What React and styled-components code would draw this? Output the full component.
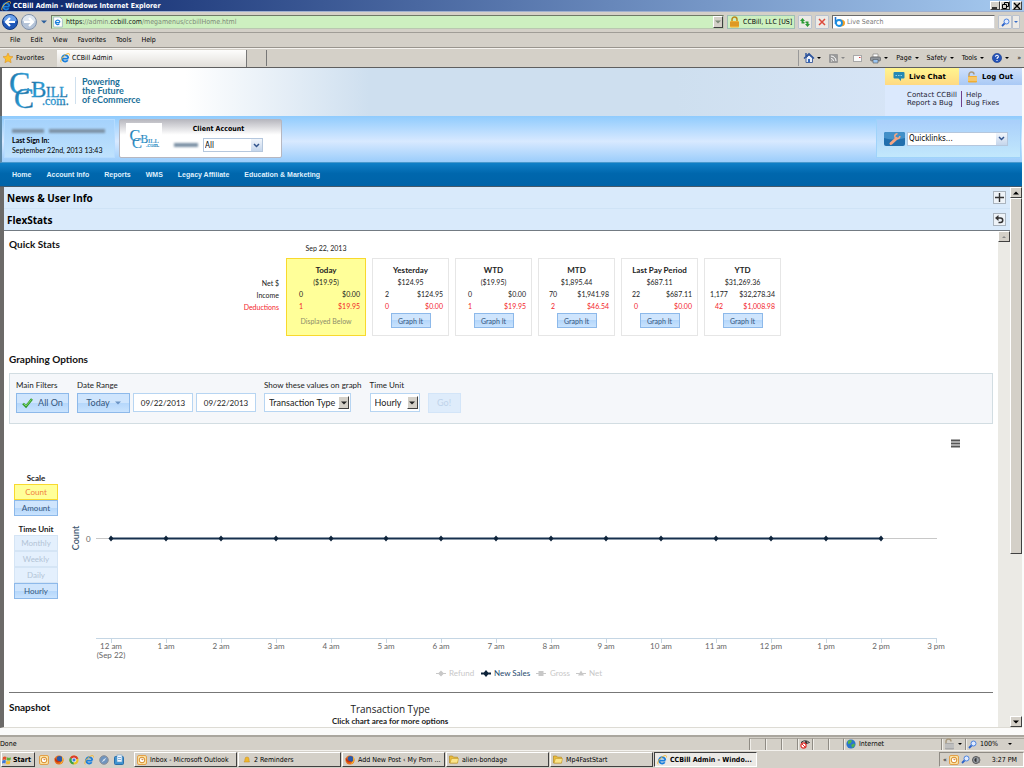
import React, { useState } from "react";
import styled, { createGlobalStyle, css } from "styled-components";

const ui = `"DejaVu Sans Condensed", "DejaVu Sans", sans-serif`;
const verdana = `"DejaVu Sans", sans-serif`;
const treb = `Lato, "Open Sans", sans-serif`;
const open = `"Open Sans", "Noto Sans", sans-serif`;
const arial = `"Liberation Sans", sans-serif`;

const GlobalStyle = createGlobalStyle`
  * {
    box-sizing: border-box;
  }
  body {
    margin: 0;
    overflow: hidden;
    color: #000;
    font-family: ${ui};
    font-size: 7px;
  }
  button, input, select {
    margin: 0;
    padding: 0;
    border: 0;
    border-radius: 0;
    background: none;
    color: inherit;
    font: inherit;
    appearance: none;
  }
  a {
    color: inherit;
    text-decoration: none;
  }
  svg {
    display: block;
    flex: none;
    overflow: visible;
  }
  h2, h3, p {
    margin: 0;
  }
`;

/* ---------- browser window ---------- */

const Window = styled.div`
  display: flex;
  flex-direction: column;
  height: 100vh;
  background: #d4d0c8;
  overflow: hidden;
`;

const TitleBar = styled.div`
  display: flex;
  align-items: center;
  gap: 2px;
  height: 12px;
  padding: 0 2px 0 1px;
  border-bottom: 1px solid #9fb0cf;
  background: linear-gradient(90deg, #0a246a, #a6caf0);
  color: #fff;
  font-weight: bold;
  white-space: nowrap;
`;

const WindowButtons = styled.div`
  display: flex;
  margin-left: auto;
`;

const raised = css`
  border: 1px solid;
  border-color: #fff #404040 #404040 #fff;
  background: #d4d0c8;
`;

const WindowButton = styled.button`
  ${raised}
  display: flex;
  align-items: center;
  justify-content: center;
  width: 10px;
  height: 9px;
  margin-left: ${(props) => (props.$apart ? "2px" : 0)};
`;

const AddressRow = styled.div`
  display: flex;
  align-items: center;
  gap: 3px;
  height: 21px;
  padding: 0 4px 0 2px;
  border-bottom: 1px solid #a09d97;
`;

const PlainButton = styled.button`
  display: flex;
  align-items: center;
  justify-content: center;
  gap: 3px;
  white-space: nowrap;
`;

const HistoryArrow = styled(PlainButton)`
  width: 8px;
`;

const AddressField = styled.div`
  display: flex;
  flex: 1;
  align-items: center;
  gap: 3px;
  height: 14px;
  padding-left: 1px;
  border: 1px solid;
  border-color: #6f7a66 #b9c8b0 #b9c8b0 #6f7a66;
  background: #cdf0c0;
  color: #7d8a78;

  b {
    color: #111;
    font-weight: normal;
  }
`;

const FieldArrow = styled.button`
  ${raised}
  display: flex;
  align-items: center;
  justify-content: center;
  width: 10px;
  height: 12px;
  margin-left: auto;
`;

const Certificate = styled.button`
  display: flex;
  align-items: center;
  gap: 3px;
  width: 68px;
  height: 14px;
  padding-left: 1px;
  border: 1px solid #9fbfb4;
  background: #cdf0c0;
  white-space: nowrap;
`;

const ToolButton = styled(PlainButton)`
  width: ${(props) => props.$width || 14}px;
  height: 14px;
  border: 1px solid #b9c2cf;
  border-radius: 1px;
  background: #eceae6;
`;

const SearchField = styled.label`
  display: flex;
  align-items: center;
  gap: 2px;
  width: 163px;
  height: 14px;
  padding-left: 1px;
  border: 1px solid;
  border-color: #6a6a6a #d8d8d8 #d8d8d8 #6a6a6a;
  background: #fff;

  input {
    flex: 1;
    min-width: 0;
  }
  input::placeholder {
    color: #777;
    opacity: 1;
  }
`;

const SearchButtons = styled.div`
  display: flex;
`;

const MenuBar = styled.nav`
  display: flex;
  align-items: center;
  gap: 10px;
  height: 15px;
  padding-left: 10px;
  border-bottom: 1px solid #99958e;
`;

const TabRow = styled.div`
  display: flex;
  align-items: center;
  height: 20px;
  padding-left: 3px;
  border-top: 1px solid #f4f2ee;
  border-bottom: 1px solid #5f5f5f;
`;

const Favorites = styled(PlainButton)`
  width: 54px;
  justify-content: flex-start;
`;

const Tab = styled.button`
  display: flex;
  align-items: center;
  gap: 2px;
  width: 190px;
  height: 17px;
  padding-left: 3px;
  border-right: 1px solid #777;
  background: linear-gradient(#fdfdfc, #e2dfda);
`;

const NewTab = styled.button`
  width: 20px;
  height: 16px;
  border-right: 1px solid #777;
`;

const CommandBar = styled.div`
  display: flex;
  align-items: center;
  gap: 8px;
  height: 16px;
  margin-left: auto;
  padding: 0 3px 0 5px;
  border-left: 1px solid #999;
`;

/* ---------- site header ---------- */

const Page = styled.main`
  display: flex;
  flex: 1;
  flex-direction: column;
  min-height: 0;
  padding: 0 2px 7px 0;
  background: #fbfbfa;
`;

const SiteHeader = styled.header`
  display: flex;
  height: 48px;
  border-left: 2px solid #666;
  background: linear-gradient(90deg, #fff 18%, #cedfef 36%, #cedfef 66%, #dbe8fb);
`;

const Brand = styled.a`
  display: flex;
  align-items: flex-start;
  padding: 2px 0 0 6px;
`;

const Tagline = styled.span`
  margin: 7px 0 0 5px;
  padding-left: 6px;
  border-left: 1px solid #cfe0ee;
  color: #1a6f98;
  font: bold 9px/9px ${treb};
  white-space: nowrap;
`;

const HeaderTools = styled.div`
  display: grid;
  grid-template-columns: 74px 63px;
  grid-template-rows: 17px auto;
  width: 137px;
  margin-left: auto;
  background: #dbe9fd;
  font-family: ${verdana};
`;

const HeaderTab = styled.button`
  display: flex;
  align-items: center;
  gap: 4px;
  padding-left: 8px;
  background: ${(props) =>
    props.$chat
      ? "linear-gradient(#fff58f, #ffd982)"
      : "linear-gradient(#cfe0fb, #a9c9f5)"};
  font-weight: bold;
  white-space: nowrap;
`;

const HeaderLinks = styled.div`
  display: grid;
  grid-column: 1 / 3;
  grid-template-columns: 54px auto;
  align-content: start;
  padding: 6px 0 0 22px;
  color: #223;
  line-height: 8px;

  a:nth-child(even) {
    padding-left: 4px;
    border-left: 1px solid #70408c;
  }
`;

const AccountBand = styled.section`
  display: flex;
  gap: 4px;
  height: 47px;
  padding: 3px 1px 4px 2px;
  border-left: 2px solid #5d89a8;
  border-bottom: 1px solid #4798cd;
  background: linear-gradient(#8fcbfd, #d8e9ff 55%, #9bcdfb);
`;

const UserBox = styled.div`
  width: 111px;
  padding: 5px 7px 0;
  border: 1px solid #b6dcff;
  background: linear-gradient(#a5d2fc, #bfe2fd);
  font: 7px/10px ${treb};
  white-space: nowrap;
`;

const Smudge = styled.span`
  display: inline-block;
  width: ${(props) => props.$width}px;
  height: 4px;
  margin-right: 5px;
  background: #7d92a6;
  filter: blur(1px);
`;

const ClientBox = styled.div`
  display: flex;
  width: 163px;
  padding: 3px 6px;
  border: 1px solid #b7b7c0;
  border-radius: 2px;
  background: linear-gradient(#b9b9c0, #fff 40%);
`;

const ClientLogo = styled.div`
  display: flex;
  align-items: center;
  justify-content: center;
  width: 36px;
  height: 32px;
  background: #fff;
`;

const ClientForm = styled.div`
  flex: 1;
  text-align: center;
  font-weight: bold;
  line-height: 13px;
`;

const ClientRow = styled.div`
  display: flex;
  align-items: center;
  justify-content: flex-end;
  margin: 2px 12px 0 0;
`;

const Combo = styled.span`
  position: relative;
  display: block;
  width: ${(props) => props.$width}px;
  height: ${(props) => props.$height || 14}px;
  border: 1px solid ${(props) => props.$edge || "#b5c7dd"};
  background: #fff;

  select {
    width: 100%;
    height: 100%;
    padding-left: ${(props) => props.$pad || 1}px;
    font-weight: normal;
    font-size: ${(props) => props.$size || 8}px;
    outline: 0;
  }
`;

const ComboArrow = styled.span`
  position: absolute;
  top: ${(props) => (props.$classic ? 2 : 0)}px;
  right: ${(props) => (props.$classic ? 1 : 0)}px;
  bottom: ${(props) => (props.$classic ? 2 : 0)}px;
  display: flex;
  align-items: center;
  justify-content: center;
  width: 11px;
  background: linear-gradient(#f1f5fb, #c5d6ec);
  pointer-events: none;
  ${(props) => props.$classic && raised}
`;

const QuickBox = styled.div`
  display: flex;
  align-items: center;
  gap: 2px;
  width: 145px;
  margin-left: auto;
  padding: 0 10px 0 7px;
  border: 1px solid #9fd3fa;
  background: linear-gradient(#a9cffb, #c2e8fc);
`;

const SiteNav = styled.nav`
  display: flex;
  align-items: center;
  gap: 15px;
  height: 24px;
  padding-left: 12px;
  border-bottom: 1px solid #44586a;
  background: linear-gradient(#1080c8, #0067ad 45%, #0063a8);
  color: #dff0fd;
  font: bold 7px ${arial};
`;

/* ---------- content ---------- */

const ContentFrame = styled.div`
  display: flex;
  flex: 1;
  min-height: 0;
  border-left: 4px solid #6c6a68;
  border-bottom: 1px solid #dddbd4;
  background: #fff;
`;

const Column = styled.div`
  display: flex;
  flex: 1;
  flex-direction: column;
  min-width: 0;
`;

const Accordion = styled.div`
  display: flex;
  align-items: center;
  justify-content: space-between;
  height: 22px;
  padding: 0 4px 0 3px;
  border-bottom: 1px solid ${(props) => (props.$open ? "#737b83" : "#cfe3f6")};
  background: #d9eafb;

  h2 {
    font: bold 10px ${open};
  }
`;

const AccordionButton = styled.button`
  display: flex;
  align-items: center;
  justify-content: center;
  width: 13px;
  height: 13px;
  border: 1px solid #aab4be;
  background: #eef3f8;
`;

const ScrollBody = styled.div`
  display: flex;
  flex: 1;
  min-height: 0;
`;

const Stats = styled.div`
  flex: 1;
  min-width: 0;
  padding: 0 5px;
  overflow: hidden;
  color: #222;
  font-family: ${treb};
`;

const Heading = styled.h3`
  color: #111;
  font: bold 10px/14px ${treb};
`;

const QuickStats = styled.section`
  padding-top: 6px;
`;

const StatRow = styled.div`
  display: flex;
  align-items: flex-end;
  gap: 6px;
  margin-top: -11px;
  font-size: 7px;
  line-height: 12px;
`;

const RowNames = styled.div`
  width: 271px;
  padding: 0 1px 23px 0;
  text-align: right;
`;

const red = "#f3252b";

const Deduction = styled.span`
  color: ${red};
`;

const CardDate = styled.p`
  padding: 2px 0 4px;
  text-align: center;
`;

const Card = styled.div`
  width: ${(props) => (props.$active ? 80 : 77)}px;
  height: 78px;
  padding: 5px 5px 0;
  border: 1px solid ${(props) => (props.$active ? "#f8d92e" : "#e6e6e6")};
  background: ${(props) => (props.$active ? "#ffff99" : "#fff")};
  text-align: center;
  white-space: nowrap;

  b {
    display: block;
    font-size: 8px;
  }
`;

const CardTable = styled.table`
  width: 100%;
  border-collapse: collapse;
  text-align: right;

  td {
    padding: 0;
  }
  td:first-child {
    width: 18px;
    text-align: center;
  }
  tr:last-child {
    color: ${red};
  }
`;

const blueButton = css`
  border: 1px solid #8db9ea;
  background: linear-gradient(#cfe5fd 50%, #b5d7fb 50%, #c9e3fe);
  color: #34567c;
`;

const GraphButton = styled.button`
  ${blueButton}
  width: 40px;
  height: 15px;
  margin-top: 1px;
  line-height: 12px;
`;

const Displayed = styled.p`
  margin-top: 3px;
  color: #8d8d6a;
`;

const Options = styled.section`
  margin-top: 16px;
`;

const FilterBar = styled.form`
  display: flex;
  align-items: flex-start;
  height: 51px;
  margin-top: 7px;
  padding: 5px 6px 0;
  border: 1px solid #d2dde2;
  background: #f5f7fa;
`;

const Field = styled.div`
  margin-right: ${(props) => props.$gap || 0}px;
  font-size: 8px;
  line-height: 12px;
  white-space: nowrap;

  > label {
    display: block;
    height: 14px;
  }
`;

const FieldRow = styled.div`
  display: flex;
  gap: 3px;
`;

const FilterButton = styled.button`
  ${blueButton}
  display: flex;
  align-items: center;
  justify-content: center;
  gap: 5px;
  width: ${(props) => props.$width || 53}px;
  height: 20px;
  font-size: 9px;

  &:disabled {
    border-color: #d3e5f8;
    background: #deecfb;
    color: #bfd3ea;
  }
`;

const DateInput = styled.input`
  width: 60px;
  height: 19px;
  border: 1px solid #b7d5f2;
  background: #fff;
  font-size: 8px;
  text-align: center;
`;

const ChartArea = styled.section`
  display: flex;
  padding-top: 8px;
`;

const Side = styled.div`
  width: 52px;
  padding: 40px 3px 0 5px;
  font-size: 8px;

  h3 {
    font: bold 8px/12px ${treb};
    text-align: center;
    white-space: nowrap;
  }
`;

const SideGroup = styled.div`
  margin-bottom: 7px;
`;

const SideButton = styled.button`
  ${blueButton}
  display: block;
  width: 44px;
  height: 16px;

  &:disabled {
    border-color: #d5e5f5;
    background: #e4f0fd;
    color: #b3c4d6;
  }
  ${(props) =>
    props.$active &&
    css`
      border-color: #f8d92e;
      background: #ffff99;
      color: #f08040;
    `}
`;

const ChartBox = styled.div`
  flex: 1;
  min-width: 0;
  padding-left: 5px;
`;

const ChartTools = styled.div`
  display: flex;
  justify-content: flex-end;
  align-items: flex-start;
  height: 24px;
  padding: 7px 32px 0 0;
`;

const Chart = styled.svg`
  width: 100%;
  height: auto;
  font-family: ${treb};
`;

const Snapshot = styled.section`
  display: flex;
  margin-top: 6px;
  padding-top: 7px;
  border-top: 1px solid #777;

  ${Heading} {
    width: 323px;
  }
`;

const SnapTitle = styled.div`
  padding-top: 3px;
  text-align: center;
  font: bold 8px/11px ${treb};

  p {
    font: 10px/13px ${open};
  }
`;

const Track = styled.div`
  display: flex;
  flex-direction: column;
  width: 12px;
  background: #ebeae5;
`;

const TrackButton = styled.button`
  ${raised}
  display: flex;
  flex: none;
  align-items: center;
  justify-content: center;
  height: 11px;

  &:disabled {
    color: #888;
  }
`;

const Thumb = styled.div`
  ${raised}
  height: 66%;
  margin-bottom: auto;
`;

/* ---------- status and task bars ---------- */

const StatusBar = styled.footer`
  display: flex;
  align-items: center;
  height: 15px;
  border-top: 2px solid #aaa69e;
  background: #d4d0c8;
`;

const Cell = styled.div`
  display: flex;
  align-items: center;
  gap: 3px;
  width: ${(props) => props.$width}px;
  height: 12px;
  padding-left: 2px;
  border-left: 1px solid #8f8b84;
  border-top: 1px solid #aaa69e;
  box-shadow: inset 1px 0 #f0eee9;

  &:nth-child(2) {
    margin-left: auto;
  }
`;

const ZoomCell = styled(Cell)`
  padding-right: 12px;

  svg:last-child {
    margin-left: auto;
  }
`;

const TaskBar = styled.footer`
  display: flex;
  align-items: center;
  height: 18px;
  padding-left: 1px;
  border-top: 1px solid #f3f1ed;
`;

const StartButton = styled.button`
  ${raised}
  display: flex;
  align-items: center;
  gap: 1px;
  width: 34px;
  height: 15px;
  font-weight: bold;
`;

const Launchers = styled.div`
  display: flex;
  justify-content: space-between;
  width: 85px;
  margin: 0 10px 0 4px;
`;

const Task = styled.button`
  ${raised}
  display: flex;
  flex: none;
  align-items: center;
  gap: 3px;
  width: 103px;
  height: 15px;
  margin-right: 1px;
  padding-left: 2px;
  white-space: nowrap;
  ${(props) =>
    props.$active &&
    css`
      border-color: #404040 #fff #fff #404040;
      background: #ebe9e5;
      font-weight: bold;
    `}
`;

const Tray = styled.div`
  display: flex;
  align-items: center;
  gap: 2px;
  width: 85px;
  height: 15px;
  margin-left: auto;
  padding: 0 6px 0 3px;
  border: 1px solid;
  border-color: #8f8b84 #fff #fff #8f8b84;
  white-space: nowrap;

  time {
    margin-left: auto;
  }
`;

/* ---------- icons ---------- */

const Caret = ({ size = 4, color = "currentColor", up }) => (
  <svg width={size} height={size} viewBox="0 0 4 4">
    <path d={up ? "M0 3h4L2 1z" : "M0 1h4L2 3z"} fill={color} />
  </svg>
);

const Chevron = () => (
  <svg width="7" height="5" viewBox="0 0 7 5">
    <path d="M1 1l2.500 2.500L6 1" fill="none" stroke="#31538c" strokeWidth="1.500" />
  </svg>
);

const IeIcon = ({ size = 10 }) => (
  <svg width={size} height={size} viewBox="0 0 16 16">
    <path
      d="M13.400 9H4.200M13.300 8.400a5 5 0 1 0-1 3.200"
      fill="none"
      stroke="#1b7fdc"
      strokeWidth="2.900"
    />
    <path
      d="M2 15C-1 13 5 4 11 1.500c4-1.600 4.500 0 4 2.500"
      fill="none"
      stroke="#f4b62c"
      strokeWidth="1.500"
    />
  </svg>
);

const PageIcon = () => (
  <svg width="10" height="10" viewBox="0 0 16 16">
    <path d="M1 0h10l4 4v12H1z" fill="#fff" stroke="#8aa0b8" />
    <path
      d="M11 9H5M11 8.500a3.500 3.500 0 1 0-1 2.500"
      fill="none"
      stroke="#1b7fdc"
      strokeWidth="2"
    />
  </svg>
);

const NavCircle = ({ forward }) => (
  <svg width="16" height="16" viewBox="0 0 16 16">
    <circle
      cx="8"
      cy="8"
      r="7.500"
      fill={forward ? "#b4c3d8" : "#1f57b8"}
      stroke={forward ? "#8292aa" : "#123a80"}
    />
    <path
      d="M1.500 7a6.500 6 0 0 1 13 0q-6 2-13 0"
      fill={forward ? "#dfe7f1" : "#6aa0ea"}
    />
    <path
      d={forward ? "M3 8h9M8 4l4 4-4 4" : "M13 8H4M8 4L4 8l4 4"}
      fill="none"
      stroke="#fff"
      strokeWidth="2.200"
    />
  </svg>
);

const LockIcon = ({ open: isOpen, gray }) => (
  <svg width="11" height="12" viewBox="0 0 11 12">
    <path
      d={isOpen ? "M2 6V3.500a2.500 2.500 0 0 1 5 0" : "M3 6V3.500a2.500 2.500 0 0 1 5 0V6"}
      fill="none"
      stroke={isOpen ? "#a99a80" : "#b98a1c"}
      strokeWidth="1.500"
    />
    <rect x="1" y="5" width="9" height="6.500" rx="1" fill={gray ? "#a8a8a8" : "#f0ad32"} />
    <path d="M1 7h9M1 9h9" stroke={gray ? "#d4d4d4" : isOpen ? "#fbe0a0" : "#c9851a"} />
  </svg>
);

const RefreshIcon = () => (
  <svg width="10" height="9" viewBox="0 0 10 9">
    <path
      d="M2.500 0L0 3h1.500v2.500h3V4H3.500V3H5zM7.500 9L10 6H8.500V3.500h-3V5h1v1H5z"
      fill="#2c9a35"
    />
  </svg>
);

const StopIcon = () => (
  <svg width="8" height="8" viewBox="0 0 8 8">
    <path d="M1 1l6 6M7 1L1 7" stroke="#dc4a3c" strokeWidth="1.500" />
  </svg>
);

const BingIcon = () => (
  <svg width="11" height="10" viewBox="0 0 11 10">
    <ellipse cx="6.500" cy="6" rx="4.500" ry="3.500" fill="#f2a024" />
    <path d="M1.500 0v7" stroke="#1b6fd0" strokeWidth="1.600" />
    <circle cx="5" cy="6" r="3" fill="#fff" stroke="#1b8fe0" strokeWidth="1.800" />
  </svg>
);

const Lens = ({ size = 9 }) => (
  <svg width={size} height={size} viewBox="0 0 9 9">
    <path d="M4 5L1 8" stroke="#2c62c8" strokeWidth="1.800" />
    <circle cx="5.500" cy="3.500" r="2.500" fill="#dfeaff" stroke="#4b83e0" />
  </svg>
);

const StarIcon = () => (
  <svg width="10" height="10" viewBox="0 0 10 10">
    <path
      d="M5 0l1.500 3.300 3.500.4-2.600 2.400.7 3.600L5 8 1.900 9.700l.7-3.600L0 3.700l3.500-.4z"
      fill="#fbc02d"
      stroke="#d9861a"
      strokeWidth=".5"
    />
  </svg>
);

const HomeIcon = () => (
  <svg width="10" height="10" viewBox="0 0 10 10">
    <path d="M2 5v4.500h6.500V5L5 2z" fill="#e9f0fb" stroke="#4a66a0" />
    <path d="M0 5.500L5 .8l5 4.700M2 0v3" fill="none" stroke="#26509c" strokeWidth="1.400" />
    <path d="M4 6h2v3.500H4z" fill="#3568b8" />
  </svg>
);

const RssIcon = () => (
  <svg width="9" height="9" viewBox="0 0 9 9">
    <rect width="9" height="9" rx="1" fill="#9a9a9a" />
    <path
      d="M2 2a5 5 0 0 1 5 5M2 4.500A2.500 2.500 0 0 1 4.500 7M2 7h.800"
      fill="none"
      stroke="#fff"
    />
  </svg>
);

const MailIcon = () => (
  <svg width="9" height="7" viewBox="0 0 9 7">
    <rect x=".5" y=".5" width="8" height="6" fill="#fafafa" stroke="#a8a8a8" />
    <path d="M6 2h1.500v1H6z" fill="#d33" />
  </svg>
);

const PrintIcon = () => (
  <svg width="11" height="9" viewBox="0 0 11 9">
    <path d="M3 0h5v3H3z" fill="#fff" stroke="#777" strokeWidth=".6" />
    <rect x=".5" y="3" width="10" height="4" rx="1" fill="#8f959c" stroke="#555" strokeWidth=".6" />
    <path d="M3 5.500h5V9H3z" fill="#9cc6f3" stroke="#555" strokeWidth=".6" />
  </svg>
);

const HelpIcon = () => (
  <svg width="10" height="10" viewBox="0 0 10 10">
    <circle cx="5" cy="5" r="4.600" fill="#2452b8" stroke="#173a88" strokeWidth=".6" />
    <path
      d="M3.500 3.700Q3.700 2.200 5.100 2.300T6.400 4Q5 4.800 5 6M5 7v1"
      fill="none"
      stroke="#fff"
      strokeWidth="1.100"
    />
  </svg>
);

const ChatIcon = () => (
  <svg width="12" height="11" viewBox="0 0 12 11">
    <path
      d="M1.500 1h9q1 0 1 1v4.500q0 1-1 1H8V10L5.500 7.500h-4q-1 0-1-1V2q0-1 1-1z"
      fill="#2488b4"
    />
    <path d="M2.500 4.500h7" stroke="#8fd0e8" strokeDasharray="1.500 1" />
  </svg>
);

const WrenchIcon = () => (
  <svg width="21" height="14" viewBox="0 0 21 14">
    <rect width="21" height="14" rx="2" fill="#216fae" />
    <path d="M0 2q0-2 2-2h17q2 0 2 2v4Q10 9 0 6z" fill="#4390c8" />
    <path d="M7 11.500l5.500-5" stroke="#f6a582" strokeWidth="3" strokeLinecap="round" />
    <path d="M15.800 4a2.500 2.500 0 1 1-2.300-2.300" fill="none" stroke="#f6a582" strokeWidth="1.600" />
  </svg>
);

const CheckIcon = () => (
  <svg width="11" height="10" viewBox="0 0 11 10">
    <path d="M1 5.500l3 3L10 1" fill="none" stroke="#2f9a2d" strokeWidth="2.400" />
    <path d="M1.500 5.500L4 8l5.500-6.500" fill="none" stroke="#8fdc6c" strokeWidth=".9" />
  </svg>
);

const UndoIcon = () => (
  <svg width="9" height="9" viewBox="0 0 9 9">
    <path
      d="M2 3h3.500a2 2 0 0 1 0 4.500H3.500"
      fill="none"
      stroke="#333"
      strokeWidth="1.500"
    />
    <path d="M0 3l3.500-3v6z" fill="#333" />
  </svg>
);

const PlusIcon = () => (
  <svg width="9" height="9" viewBox="0 0 9 9">
    <path d="M4.500 0v9M0 4.500h9" stroke="#333" strokeWidth="1.400" />
  </svg>
);

const BarsIcon = () => (
  <svg width="10" height="9" viewBox="0 0 10 9">
    <path d="M0 1.500h9M0 4.500h9M0 7.500h9" stroke="#555" strokeWidth="1.800" />
  </svg>
);

const OutlookIcon = () => (
  <svg width="10" height="10" viewBox="0 0 10 10">
    <rect x=".5" y=".5" width="9" height="9" rx="1.500" fill="#fbe3a4" stroke="#e2a04a" />
    <circle cx="5" cy="5" r="2.800" fill="#fff" stroke="#d98b2a" />
    <path d="M5 3.500V5l1.500-.8" fill="none" stroke="#c4701a" strokeWidth=".8" />
  </svg>
);

const FirefoxIcon = () => (
  <svg width="10" height="10" viewBox="0 0 10 10">
    <circle cx="5" cy="5" r="4.600" fill="#e8701a" />
    <circle cx="5.500" cy="4" r="2.900" fill="#2d5aa8" />
    <path d="M.6 3Q2 3.500 3 5t3.500 1.200Q5 8 2.800 7.200.6 6 .6 3z" fill="#c8330f" />
    <path d="M8.500 2Q10 6 6.500 9" fill="none" stroke="#fbbb33" />
  </svg>
);

const ChromeIcon = () => (
  <svg width="10" height="10" viewBox="0 0 10 10">
    <circle cx="5" cy="5" r="4.600" fill="#e9c326" />
    <path d="M5 5L1 2.700a4.600 4.600 0 0 1 8.300.7z" fill="#dc3b2e" />
    <path d="M5 5L1 2.700A4.600 4.600 0 0 0 4.500 9.600z" fill="#37a04a" />
    <circle cx="5" cy="5" r="2" fill="#3e7be0" stroke="#fff" strokeWidth=".8" />
  </svg>
);

const CompassIcon = () => (
  <svg width="10" height="10" viewBox="0 0 10 10">
    <circle cx="5" cy="5" r="4.300" fill="#6f94be" stroke="#8b8f96" />
    <path d="M7.500 2.500L5.500 5.500 2.500 7.500l2-3z" fill="#dde6f0" />
  </svg>
);

const DeskIcon = () => (
  <svg width="10" height="10" viewBox="0 0 10 10">
    <rect x=".5" y="1.500" width="9" height="8" rx="1" fill="#3c93d0" stroke="#2a6da8" />
    <rect x="3" y="0" width="5" height="7" fill="#eef6fd" stroke="#6a9cc8" strokeWidth=".6" />
    <path d="M4 2.500h3M4 4.500h3" stroke="#5a94c8" strokeWidth=".7" />
  </svg>
);

const FolderIcon = () => (
  <svg width="10" height="9" viewBox="0 0 10 9">
    <path d="M.5 1h3l1 1.200h4V8h-8z" fill="#e9bc3e" stroke="#b78b20" strokeWidth=".7" />
    <path d="M1 8l1.500-4.500h7L8.500 8z" fill="#fbe48a" stroke="#c39a2a" strokeWidth=".6" />
  </svg>
);

const BellIcon = () => (
  <svg width="10" height="9" viewBox="0 0 10 9">
    <path d="M3 7q1-1 1-3t2-2 2 2 .5 3z" fill="#f0b72c" stroke="#c68a18" strokeWidth=".5" />
  </svg>
);

const FlagIcon = () => (
  <svg width="10" height="10" viewBox="0 0 10 10">
    <path d="M1 2q2-1 3.500 0L4 5Q2.500 4 .5 5z" fill="#e2522c" />
    <path d="M5 2.200q2 1 4 0L8.500 5q-2 1-4 0z" fill="#5fb13a" />
    <path d="M.4 5.500q2-1 3.500 0l-.5 3Q2 7.500 0 8.500z" fill="#3d78d8" />
    <path d="M4.400 5.700q2 1 4 0l-.5 3q-2 1-4 0z" fill="#f2bd2c" />
  </svg>
);

const GlobeIcon = () => (
  <svg width="10" height="10" viewBox="0 0 10 10">
    <circle cx="5" cy="5" r="4.600" fill="#2a74cc" />
    <path d="M2 2q3-2 4 0L4.500 4.500 2 5zM5 6l3-1.500L9 6 6.500 9z" fill="#52b548" />
  </svg>
);

const EyeIcon = () => (
  <svg width="10" height="10" viewBox="0 0 10 10">
    <path d="M1 3.500Q5 0 9.500 3.500 5 6.500 1 3.500z" fill="#fff" stroke="#333" />
    <circle cx="6" cy="3.500" r="1.400" fill="#333" />
    <circle cx="3.500" cy="6.500" r="2.600" fill="#fff" stroke="#e0302c" strokeWidth="1.200" />
    <path d="M2 5l3 3" stroke="#e0302c" />
  </svg>
);

const SpeakerIcon = () => (
  <svg width="9" height="10" viewBox="0 0 9 10">
    <circle cx="4" cy="5" r="3.500" fill="#9aa0a8" stroke="#555" />
    <path d="M2.500 4l2-1.500v5L2.500 6z" fill="#333" />
    <path d="M7 2q2 3 0 6" fill="none" stroke="#777" />
  </svg>
);

const Logo = ({ width, height, id }) => (
  <svg width={width} height={height} viewBox="0 0 62 42" fontFamily='"Liberation Serif", serif'>
    <defs>
      <linearGradient id={id} x1="0" y1="0" x2="1" y2="1">
        <stop offset="0" stopColor="#155f92" />
        <stop offset=".5" stopColor="#2b9bd4" />
        <stop offset="1" stopColor="#14608f" />
      </linearGradient>
    </defs>
    <g fill={`url(#${id})`} stroke={`url(#${id})`} strokeWidth=".3">
      <text x="1" y="24" fontSize="32">C</text>
      <text x="6" y="38" fontSize="30">C</text>
      <text x="23" y="27" fontSize="23">B</text>
      <text x="38" y="27" fontSize="14">ILL</text>
      <text x="34" y="35" fontSize="12">.com.</text>
    </g>
  </svg>
);

/* ---------- data ---------- */

const cards = [
  { name: "Today", net: "($19.95)", income: ["0", "$0.00"], deductions: ["1", "$19.95"] },
  { name: "Yesterday", net: "$124.95", income: ["2", "$124.95"], deductions: ["0", "$0.00"] },
  { name: "WTD", net: "($19.95)", income: ["0", "$0.00"], deductions: ["1", "$19.95"] },
  { name: "MTD", net: "$1,895.44", income: ["70", "$1,941.98"], deductions: ["2", "$46.54"] },
  { name: "Last Pay Period", net: "$687.11", income: ["22", "$687.11"], deductions: ["0", "$0.00"] },
  { name: "YTD", net: "$31,269.36", income: ["1,177", "$32,278.34"], deductions: ["42", "$1,008.98"] },
];

const hours = [
  "12 am", "1 am", "2 am", "3 am", "4 am", "5 am", "6 am", "7 am",
  "8 am", "9 am", "10 am", "11 am", "12 pm", "1 pm", "2 pm", "3 pm",
];

const hourX = (i) => 45 + i * 55;

const menus = ["File", "Edit", "View", "Favorites", "Tools", "Help"];

const siteLinks = [
  "Home", "Account Info", "Reports", "WMS", "Legacy Affiliate", "Education & Marketing",
];

const tasks = [
  { name: "Inbox - Microsoft Outlook", icon: <OutlookIcon /> },
  { name: "2 Reminders", icon: <BellIcon /> },
  { name: "Add New Post ‹ My Porn ...", icon: <FirefoxIcon /> },
  { name: "alien-bondage", icon: <FolderIcon /> },
  { name: "Mp4FastStart", icon: <FolderIcon /> },
  { name: "CCBill Admin - Windo...", icon: <IeIcon />, active: true },
];

/* ---------- parts ---------- */

const BrowserBars = () => (
  <>
    <TitleBar>
      <IeIcon />
      <span>CCBill Admin - Windows Internet Explorer</span>
      <WindowButtons>
        <WindowButton aria-label="Minimize">
          <svg width="6" height="6"><path d="M0 5h5" stroke="#000" strokeWidth="1.500" /></svg>
        </WindowButton>
        <WindowButton aria-label="Restore">
          <svg width="7" height="7">
            <path d="M2.500 3V.5h4v4H5M.5 2.500h4v4h-4z" fill="none" stroke="#000" />
          </svg>
        </WindowButton>
        <WindowButton aria-label="Close" $apart>
          <svg width="6" height="6"><path d="M0 0l6 6M6 0L0 6" stroke="#000" strokeWidth="1.300" /></svg>
        </WindowButton>
      </WindowButtons>
    </TitleBar>

    <AddressRow>
      <PlainButton aria-label="Back"><NavCircle /></PlainButton>
      <PlainButton aria-label="Forward"><NavCircle forward /></PlainButton>
      <HistoryArrow aria-label="Recent pages"><Caret size={6} color="#2d5f9c" /></HistoryArrow>
      <AddressField>
        <PageIcon />
        <span>
          <b>https:</b>//admin.<b>ccbill.com</b>/megamenus/ccbillHome.html
        </span>
        <FieldArrow aria-label="Show addresses"><Caret size={6} /></FieldArrow>
      </AddressField>
      <Certificate><LockIcon />CCBill, LLC [US]</Certificate>
      <ToolButton aria-label="Refresh"><RefreshIcon /></ToolButton>
      <ToolButton aria-label="Stop"><StopIcon /></ToolButton>
      <SearchField>
        <BingIcon />
        <input aria-label="Live Search" placeholder="Live Search" />
      </SearchField>
      <SearchButtons>
        <ToolButton aria-label="Search"><Lens /></ToolButton>
        <ToolButton aria-label="Search options" $width={8}><Caret color="#3a6fc8" /></ToolButton>
      </SearchButtons>
    </AddressRow>

    <MenuBar>
      {menus.map((m) => (
        <PlainButton key={m}>{m}</PlainButton>
      ))}
    </MenuBar>

    <TabRow>
      <Favorites><StarIcon />Favorites</Favorites>
      <Tab><IeIcon />CCBill Admin</Tab>
      <NewTab aria-label="New tab" />
      <CommandBar>
        <PlainButton aria-label="Home"><HomeIcon /><Caret /></PlainButton>
        <PlainButton aria-label="Feeds"><RssIcon /><Caret color="#888" /></PlainButton>
        <PlainButton aria-label="Mail"><MailIcon /></PlainButton>
        <PlainButton aria-label="Print"><PrintIcon /><Caret /></PlainButton>
        <PlainButton>Page <Caret /></PlainButton>
        <PlainButton>Safety <Caret /></PlainButton>
        <PlainButton>Tools <Caret /></PlainButton>
        <PlainButton aria-label="Help"><HelpIcon /><Caret /></PlainButton>
        <PlainButton aria-label="More">»</PlainButton>
      </CommandBar>
    </TabRow>
  </>
);

const SiteTop = () => (
  <>
    <SiteHeader>
      <Brand href="#" aria-label="CCBill.com">
        <Logo width={62} height={42} id="logoBig" />
        <Tagline>
          Powering
          <br />
          the Future
          <br />
          of eCommerce
        </Tagline>
      </Brand>
      <HeaderTools>
        <HeaderTab $chat><ChatIcon />Live Chat</HeaderTab>
        <HeaderTab><LockIcon open />Log Out</HeaderTab>
        <HeaderLinks>
          <a href="#">Contact CCBill</a>
          <a href="#">Help</a>
          <a href="#">Report a Bug</a>
          <a href="#">Bug Fixes</a>
        </HeaderLinks>
      </HeaderTools>
    </SiteHeader>

    <AccountBand>
      <UserBox>
        <div>
          <Smudge $width={32} />
          <Smudge $width={56} />
        </div>
        <b>Last Sign In:</b>
        <br />
        September 22nd, 2013 13:43
      </UserBox>
      <ClientBox>
        <ClientLogo><Logo width={31} height={21} id="logoSmall" /></ClientLogo>
        <ClientForm>
          <label htmlFor="client">Client Account</label>
          <ClientRow>
            <Smudge $width={24} />
            <Combo $width={60}>
              <select id="client"><option>All</option></select>
              <ComboArrow><Chevron /></ComboArrow>
            </Combo>
          </ClientRow>
        </ClientForm>
      </ClientBox>
      <QuickBox>
        <WrenchIcon />
        <Combo $width={101}>
          <select aria-label="Quicklinks"><option>Quicklinks...</option></select>
          <ComboArrow><Chevron /></ComboArrow>
        </Combo>
      </QuickBox>
    </AccountBand>

    <SiteNav>
      {siteLinks.map((l) => (
        <a key={l} href="#">{l}</a>
      ))}
    </SiteNav>
  </>
);

const StatCard = ({ card, active }) => (
  <Card $active={active}>
    <b>{card.name}</b>
    {card.net}
    <CardTable>
      <tbody>
        <tr><td>{card.income[0]}</td><td>{card.income[1]}</td></tr>
        <tr><td>{card.deductions[0]}</td><td>{card.deductions[1]}</td></tr>
      </tbody>
    </CardTable>
    {active ? <Displayed>Displayed Below</Displayed> : <GraphButton>Graph It</GraphButton>}
  </Card>
);

const Filters = () => (
  <FilterBar onSubmit={(e) => e.preventDefault()}>
    <Field $gap={8}>
      <label htmlFor="allOn">Main Filters</label>
      <FilterButton id="allOn" type="button"><CheckIcon />All On</FilterButton>
    </Field>
    <Field $gap={8}>
      <label htmlFor="from">Date Range</label>
      <FieldRow>
        <FilterButton type="button">Today <Caret size={6} color="#6b93c4" /></FilterButton>
        <DateInput id="from" defaultValue="09/22/2013" />
        <DateInput aria-label="Date range end" defaultValue="09/22/2013" />
      </FieldRow>
    </Field>
    <Field $gap={8}>
      <label htmlFor="values">Show these values on graph</label>
      <Combo $width={87} $height={19} $pad={4} $size={9} $edge="#b7d5f2">
        <select id="values"><option>Transaction Type</option></select>
        <ComboArrow $classic><Caret size={6} /></ComboArrow>
      </Combo>
    </Field>
    <Field $gap={8}>
      <label htmlFor="unit">Time Unit</label>
      <Combo $width={50} $height={19} $pad={4} $size={9} $edge="#b7d5f2">
        <select id="unit"><option>Hourly</option></select>
        <ComboArrow $classic><Caret size={6} /></ComboArrow>
      </Combo>
    </Field>
    <Field>
      <label htmlFor="go" />
      <FilterButton id="go" $width={33} disabled>Go!</FilterButton>
    </Field>
  </FilterBar>
);

const SalesChart = () => (
  <Chart viewBox="0 0 927 230" role="img" aria-label="New sales by hour">
    <path d="M30 82.500H871" stroke="#c8c8c8" />
    <path d="M30 182.500H871" stroke="#c5d6e4" />
    <path d={`M${hourX(0)} 82.500H${hourX(14)}`} stroke="#16304e" strokeWidth="1.800" />
    {hours.map((h, i) => (
      <g key={h} transform={`translate(${hourX(i)} 0)`}>
        <path d="M.5 183v4" stroke="#c5d6e4" />
        {i < 15 && <path d="M0 79.500l2.500 3-2.500 3-2.500-3z" fill="#0d233a" />}
        <text y="193" textAnchor="middle" fontSize="8" fill="#666">{h}</text>
      </g>
    ))}
    <text x={hourX(0)} y="202" textAnchor="middle" fontSize="8" fill="#666">(Sep 22)</text>
    <text x="20" y="86" fontSize="8" fill="#666">0</text>
    <text transform="translate(13 82) rotate(-90)" textAnchor="middle" fontSize="9" fontWeight="600" fill="#3e576f">
      Count
    </text>
    <g fontSize="8" fill="#c8c8c8" stroke="none">
      <path d="M370 217h10v1h-10zM375 214.500l3 3-3 3-3-3z" />
      <text x="383" y="220">Refund</text>
      <path d="M415 216.500h10v2h-10zM420 214l3 3.500-3 3.500-3-3.500z" fill="#0d233a" />
      <text x="428" y="220" fill="#274b6d">New Sales</text>
      <path d="M470 217h10v1h-10zM472.500 215h5v5h-5z" />
      <text x="484" y="220">Gross</text>
      <path d="M510 217h10v1h-10zM515 214.500l3 5h-6z" />
      <text x="523" y="220">Net</text>
    </g>
  </Chart>
);

const App = () => {
  const [scale, setScale] = useState("Count");

  return (
    <Window>
      <GlobalStyle />
      <BrowserBars />
      <Page>
        <SiteTop />
        <ContentFrame>
          <Column>
            <Accordion>
              <h2>News &amp; User Info</h2>
              <AccordionButton aria-label="Expand"><PlusIcon /></AccordionButton>
            </Accordion>
            <Accordion $open>
              <h2>FlexStats</h2>
              <AccordionButton aria-label="Reset"><UndoIcon /></AccordionButton>
            </Accordion>
            <ScrollBody>
              <Stats>
                <QuickStats>
                  <Heading>Quick Stats</Heading>
                  <StatRow>
                    <RowNames>
                      Net $
                      <br />
                      Income
                      <br />
                      <Deduction>Deductions</Deduction>
                    </RowNames>
                    <div>
                      <CardDate>Sep 22, 2013</CardDate>
                      <StatCard card={cards[0]} active />
                    </div>
                    {cards.slice(1).map((c) => (
                      <StatCard key={c.name} card={c} />
                    ))}
                  </StatRow>
                </QuickStats>

                <Options>
                  <Heading>Graphing Options</Heading>
                  <Filters />
                </Options>

                <ChartArea>
                  <Side>
                    <SideGroup>
                      <h3>Scale</h3>
                      {["Count", "Amount"].map((s) => (
                        <SideButton key={s} $active={s === scale} onClick={() => setScale(s)}>
                          {s}
                        </SideButton>
                      ))}
                    </SideGroup>
                    <SideGroup>
                      <h3>Time Unit</h3>
                      <SideButton disabled>Monthly</SideButton>
                      <SideButton disabled>Weekly</SideButton>
                      <SideButton disabled>Daily</SideButton>
                      <SideButton>Hourly</SideButton>
                    </SideGroup>
                  </Side>
                  <ChartBox>
                    <ChartTools>
                      <PlainButton aria-label="Chart menu"><BarsIcon /></PlainButton>
                    </ChartTools>
                    <SalesChart />
                  </ChartBox>
                </ChartArea>

                <Snapshot>
                  <Heading>Snapshot</Heading>
                  <SnapTitle>
                    <p>Transaction Type</p>
                    Click chart area for more options
                  </SnapTitle>
                </Snapshot>
              </Stats>
              <Track>
                <TrackButton disabled aria-label="Scroll up"><Caret up /></TrackButton>
              </Track>
            </ScrollBody>
          </Column>
          <Track>
            <TrackButton aria-label="Scroll page up"><Caret up size={6} /></TrackButton>
            <Thumb />
            <TrackButton aria-label="Scroll page down"><Caret size={6} /></TrackButton>
          </Track>
        </ContentFrame>
      </Page>

      <StatusBar>
        <span>Done</span>
        <Cell $width={16} />
        <Cell $width={16} />
        <Cell $width={16} />
        <Cell $width={15}><EyeIcon /></Cell>
        <Cell $width={16} />
        <Cell $width={15} />
        <Cell $width={98}><GlobeIcon />Internet</Cell>
        <Cell $width={24}><LockIcon open gray /><Caret /></Cell>
        <ZoomCell $width={59}><Lens />100%<Caret /></ZoomCell>
      </StatusBar>

      <TaskBar>
        <StartButton><FlagIcon />Start</StartButton>
        <Launchers>
          <OutlookIcon />
          <FirefoxIcon />
          <ChromeIcon />
          <IeIcon />
          <CompassIcon />
          <DeskIcon />
        </Launchers>
        {tasks.map((t) => (
          <Task key={t.name} $active={t.active}>
            {t.icon}
            {t.name}
          </Task>
        ))}
        <Tray>
          <span>«</span>
          <OutlookIcon />
          <Lens />
          <SpeakerIcon />
          <time>3:27 PM</time>
        </Tray>
      </TaskBar>
    </Window>
  );
};

export default App;
